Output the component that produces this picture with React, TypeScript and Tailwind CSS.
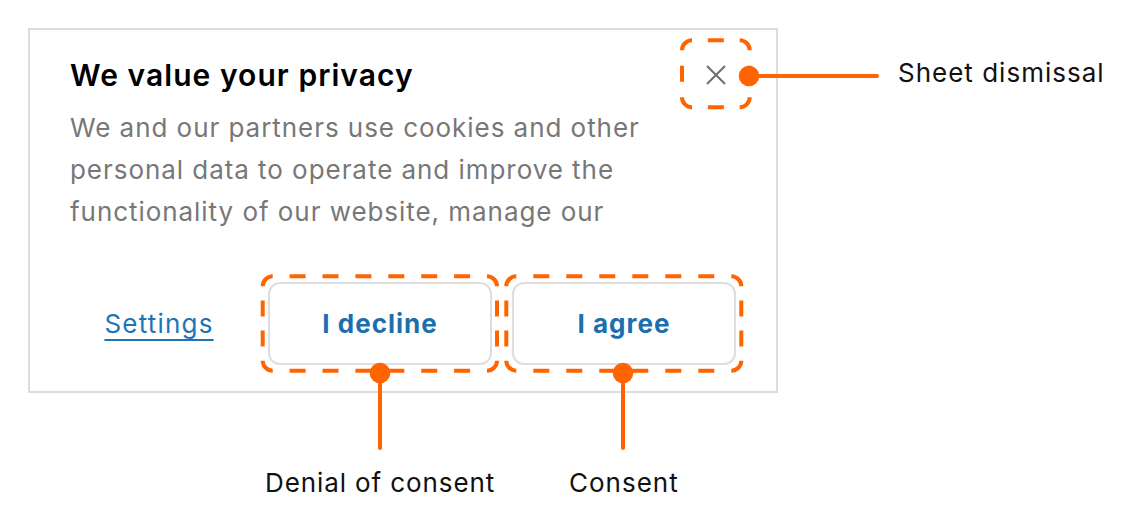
import React from 'react'

const ORANGE = '#ff6400'

interface BoxProps {
    x: number
    y: number
    w: number
    h: number
    r?: number
}

// dashed annotation frame: solid corners, dashes spread evenly on each side
function DashedBox({ x, y, w, h, r = 10 }: BoxProps) {
    const dash = 16
    const side = (len: number) => {
        const n = Math.max(1, Math.round((len - 15.5) / 31.5))
        const gap = (len - n * dash) / (n + 1)
        return { strokeDasharray: `${dash} ${gap}`, strokeDashoffset: dash }
    }
    const hz = side(w - 2 * r)
    const vt = side(h - 2 * r)
    const common = { stroke: ORANGE, strokeWidth: 4, fill: 'none' }
    return (
        <g>
            <line x1={x + r} y1={y} x2={x + w - r} y2={y} {...common} {...hz} />
            <line x1={x + r} y1={y + h} x2={x + w - r} y2={y + h} {...common} {...hz} />
            <line x1={x} y1={y + r} x2={x} y2={y + h - r} {...common} {...vt} />
            <line x1={x + w} y1={y + r} x2={x + w} y2={y + h - r} {...common} {...vt} />
            <path d={`M${x} ${y + r} A${r} ${r} 0 0 1 ${x + r} ${y}`} {...common} />
            <path d={`M${x + w - r} ${y} A${r} ${r} 0 0 1 ${x + w} ${y + r}`} {...common} />
            <path d={`M${x + w} ${y + h - r} A${r} ${r} 0 0 1 ${x + w - r} ${y + h}`} {...common} />
            <path d={`M${x + r} ${y + h} A${r} ${r} 0 0 1 ${x} ${y + h - r}`} {...common} />
        </g>
    )
}

function Annotations() {
    return (
        <svg className="absolute inset-0 pointer-events-none" width="1136" height="528" viewBox="0 0 1136 528">
            <DashedBox x={682} y={40.3} w={67.7} h={67} />
            <DashedBox x={262.7} y={276.3} w={234.3} h={94.4} />
            <DashedBox x={506.3} y={276.3} w={235} h={94.4} />

            {/* leader lines */}
            <line x1={749} y1={76} x2={877} y2={76} stroke={ORANGE} strokeWidth={4} strokeLinecap="round" />
            <line x1={380} y1={373} x2={380} y2={448} stroke={ORANGE} strokeWidth={4} strokeLinecap="round" />
            <line x1={623} y1={373} x2={623} y2={448} stroke={ORANGE} strokeWidth={4} strokeLinecap="round" />

            <circle cx={749} cy={76} r={10.3} fill={ORANGE} />
            <circle cx={380} cy={373} r={10.3} fill={ORANGE} />
            <circle cx={623} cy={373} r={10.3} fill={ORANGE} />
        </svg>
    )
}

export default function App() {
    return (
        <div
            className="relative w-[1136px] h-[528px] bg-white pl-[28px] pt-[28px]"
            style={{ fontFamily: 'Inter, "Noto Sans", sans-serif' }}
        >
            {/* Consent sheet */}
            <div className="w-[750px] h-[365px] border-2 border-[#dcdcdc] px-10 pt-[23px] flex flex-col">
                <div className="flex items-center justify-between h-11">
                    <h2 className="text-[30px] leading-9 font-semibold tracking-[1.05px] text-black">We value your privacy</h2>
                    <button className="w-11 h-11 -mr-[2px] flex items-center justify-center" aria-label="Close">
                        <svg width="20" height="20" viewBox="0 0 20 20">
                            <path d="M1 1L19 19M19 1L1 19" stroke="#6e6e6e" strokeWidth={2} />
                        </svg>
                    </button>
                </div>

                <p className="mt-[10px] h-[126px] w-[640px] overflow-hidden text-[26px] leading-[42px] tracking-[0.95px] text-[#777]">
                    We and our partners use cookies and other personal data to operate and improve the
                    functionality of our website, manage our
                </p>

                <div className="mt-[49px] flex items-center gap-5">
                    <div className="flex-1 text-center">
                        <a className="text-[26px] tracking-[1.2px] text-[#1f74b6] underline underline-offset-[6px] decoration-[1.5px]" href="#">
                            Settings
                        </a>
                    </div>
                    <button className="w-[224px] h-[83px] rounded-[12px] border-2 border-[#dedede] text-[26px] font-bold tracking-[1px] text-[#1c6fae]">
                        I decline
                    </button>
                    <button className="w-[224px] h-[83px] rounded-[12px] border-2 border-[#dedede] text-[26px] font-bold tracking-[1px] text-[#1c6fae]">
                        I agree
                    </button>
                </div>
            </div>

            <Annotations />

            {/* Labels */}
            <span className="absolute left-[898px] top-[60px] text-[26px] leading-[26px] tracking-[1px] text-[#111]">Sheet dismissal</span>
            <span className="absolute left-[265px] top-[470px] text-[26px] leading-[26px] tracking-[0.9px] text-[#111]">Denial of consent</span>
            <span className="absolute left-[569px] top-[470px] text-[26px] leading-[26px] tracking-[1px] text-[#111]">Consent</span>
        </div>
    )
}
